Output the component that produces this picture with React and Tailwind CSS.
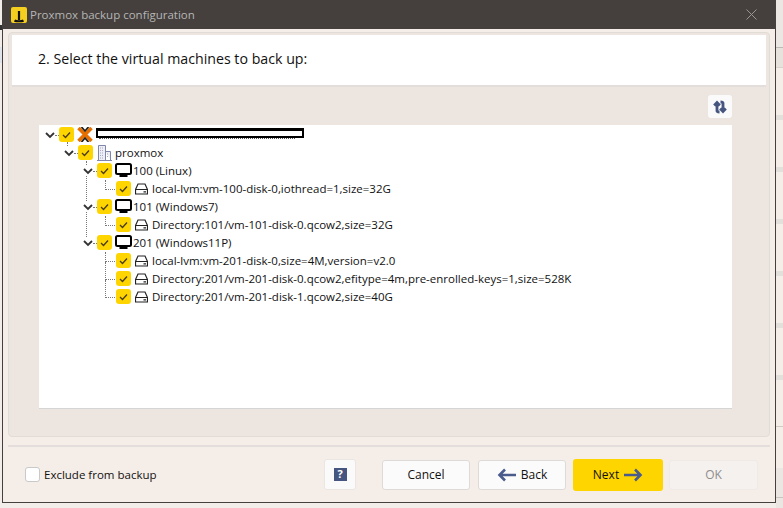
import React from 'react';

const font = "font-['Open_Sans','Noto_Sans',sans-serif]";

// bands of the window that sits behind the dialog, right edge
const backRows = [
  { h: 47, bg: 'bg-[#ece7e3]' },
  { h: 1, bg: 'bg-[#bdb9b6]' },
  { h: 19, bg: 'bg-[#e8e2dd]' },
  { h: 1, bg: 'bg-[#d8d3cf]' },
  { h: 47, bg: 'bg-[#f5ede7]' },
  { h: 5, bg: 'bg-[#e3dfdb]' },
  { h: 47, bg: 'bg-[#f5ede7]' },
  { h: 5, bg: 'bg-[#e3dfdb]' },
  { h: 47, bg: 'bg-[#f5ede7]' },
  { h: 5, bg: 'bg-[#e3dfdb]' },
  { h: 47, bg: 'bg-[#f5ede7]' },
  { h: 5, bg: 'bg-[#e3dfdb]' },
  { h: 47, bg: 'bg-[#f5ede7]' },
  { h: 5, bg: 'bg-[#e3dfdb]' },
  { h: 47, bg: 'bg-[#f5ede7]' },
  { h: 5, bg: 'bg-[#e3dfdb]' },
  { h: 46, bg: 'bg-[#f5ede7]' },
  { h: 1, bg: 'bg-[#cfcac6]' },
  { h: 41, bg: 'bg-[#f5ede7]' },
  { h: 29, bg: 'bg-[#ebe6e2]' },
  { h: 1, bg: 'bg-[#c8c4c0]' },
  { h: 11, bg: 'bg-[#ebe6e2]' },
];

const CheckBox = () => (
  <span className="mb-[1px] flex h-[15px] w-[15px] shrink-0 items-center justify-center rounded-[3px] bg-[#ffd500]">
    <svg width="9" height="8" viewBox="0 0 9 8" fill="none">
      <path d="M1 4l2.500 2.500L8 1.500" stroke="#4a3c10" strokeWidth="1.3" />
    </svg>
  </span>
);

const Chevron = () => (
  <span className="relative z-10 flex h-[10px] w-[10px] shrink-0 items-center bg-white">
    <svg width="10" height="7" viewBox="0 0 10 7" fill="none">
      <path d="M1 1l4 4 4-4" stroke="#333" strokeWidth="1.8" />
    </svg>
  </span>
);

const Monitor = () => (
  <svg width="17" height="15" viewBox="0 0 17 15" className="block shrink-0">
    <rect x="1" y="1" width="15" height="10" rx="1.500" fill="#fff" stroke="#000" strokeWidth="2" />
    <path d="M4.500 11h8v3h-8z" fill="#000" />
  </svg>
);

const Disk = () => (
  <svg width="13" height="12" viewBox="0 0 13 12" fill="none" className="shrink-0">
    <path d="M3 1h7l2.500 5.500V11H.5V6.500z" stroke="#222" strokeWidth="1.200" />
    <path d="M.5 6.500h12M8.500 8.800h2.500" stroke="#222" strokeWidth="1.200" />
  </svg>
);

const Building = () => (
  <svg width="15" height="16" viewBox="0 0 15 16" fill="none" className="block shrink-0">
    <path d="M1.500 15V.5h7V15M8.500 6.500h5V15" fill="#eeeef4" stroke="#7f85ab" />
    <path d="M0 15.500h15" stroke="#7f85ab" />
    <path d="M3 3h4M3 5.500h4M3 8h4M3 10.500h4M3 13h4M10 9h2M10 11.500h2" stroke="#a4a8c4" strokeDasharray="1 1" />
  </svg>
);

const ProxmoxLogo = () => (
  <svg width="16" height="15" viewBox="0 0 16 15" className="block shrink-0">
    <path d="M1.500 1l13 13M14.500 1l-13 13" stroke="#e57000" strokeWidth="3.600" />
    <path d="M4.500 0L8 4l3.500-4M4.500 15L8 11l3.500 4" stroke="#222" strokeWidth="1.800" fill="none" />
  </svg>
);

const Row = ({ indent, children }) => (
  <div className="flex h-[18px] items-center whitespace-nowrap" style={{ paddingLeft: indent }}>
    <Chevron />
    <span className="w-[4px] shrink-0 border-b border-dotted border-[#777]" />
    {children}
  </div>
);

const VmRow = ({ label }) => (
  <Row indent={44}>
    <CheckBox />
    <span className="mb-[1px] ml-[3px]"><Monitor /></span>
    <span className="ml-[1px]">{label}</span>
  </Row>
);

const DiskRow = ({ label, tall }) => (
  <div className="relative ml-[66px] flex h-[18px] items-center gap-[4px] whitespace-nowrap pl-[11px]">
    <span className={`absolute bottom-[8px] left-0 w-[10px] border-b border-l border-dotted border-[#777] ${tall ? 'h-[18px]' : 'h-[10px]'}`} />
    <CheckBox />
    <Disk />
    <span>{label}</span>
  </div>
);

const Footer = () => (
  <div className="flex h-[55px] items-center pl-[22px] pr-[17px] text-[12px] text-[#111]">
    <span className="h-[15px] w-[15px] rounded-[3px] border border-[#c9c9c9] bg-white" />
    <span className="ml-[4px] whitespace-nowrap text-[11.5px]">Exclude from backup</span>
    <button className="ml-auto flex h-[31px] w-[32px] items-center justify-center rounded-[3px] border border-[#ebe6e2] bg-[#fbfafa]">
      <span className="flex h-[13px] w-[13px] items-center justify-center bg-[#46557f] text-[11px] font-bold text-white">?</span>
    </button>
    <button className="ml-[26px] h-[30px] w-[88px] rounded-[3px] border border-[#dedad7] bg-[#fcfbfb]">Cancel</button>
    <button className="ml-[8px] flex h-[30px] w-[88px] items-center justify-center gap-[5px] rounded-[3px] border border-[#dedad7] bg-[#fcfbfb]">
      <svg width="19" height="14" viewBox="0 0 19 14" fill="none">
        <path d="M19 7H3M8 1.500L2.500 7 8 12.500" stroke="#4a5c8c" strokeWidth="2.600" />
      </svg>
      Back
    </button>
    <button className="ml-[7px] flex h-[32px] w-[90px] items-center justify-center gap-[5px] rounded-[3px] bg-[#ffd500]">
      Next
      <svg width="19" height="14" viewBox="0 0 19 14" fill="none">
        <path d="M0 7h16M11 1.500L16.500 7 11 12.500" stroke="#4a5c8c" strokeWidth="2.600" />
      </svg>
    </button>
    <button className="ml-[6px] h-[30px] w-[89px] rounded-[3px] border border-[#efeae6] bg-[#f5f1ee] text-[#8d8d8d]">OK</button>
  </div>
);

export default function App() {
  return (
    <div className={`flex h-[508px] w-[783px] overflow-hidden bg-[#f2ede8] ${font}`}>
      <div className="flex w-[2px] shrink-0 flex-col">
        <div className="mt-[25px] h-[5px] bg-[#333]" />
        <div className="mt-[17px] h-[16px] bg-[#dfe3ea]" />
      </div>

      <div className="flex h-[503px] w-[774px] shrink-0 flex-col border-x border-b border-[#45403d] bg-[#f5ede7]">
        {/* title bar */}
        <div className="flex h-[29px] shrink-0 items-center bg-[#45403d] pl-[8px] pr-[18px] text-[11.5px] text-[#b5b5b5]">
          <span className="flex h-[16px] w-[16px] items-end justify-center rounded-[2px] bg-[#f5cf1f]">
            <svg width="12" height="13" viewBox="0 0 12 13" fill="none">
              <path d="M6 1v9M1.500 10.500c1.500 1 7.500 1 9 0" stroke="#111" strokeWidth="2.200" />
            </svg>
          </span>
          <span className="ml-[3px]">Proxmox backup configuration</span>
          <svg className="ml-auto" width="11" height="11" viewBox="0 0 11 11" fill="none">
            <path d="M.5.5l10 10M10.500.5l-10 10" stroke="#9a9694" />
          </svg>
        </div>

        {/* wizard page */}
        <div className="mx-[5px] mt-[3px] flex h-[405px] shrink-0 flex-col rounded-[4px] border border-[#e2dcd7] bg-[#ece5e0] px-[3px] pt-[2px]">
          <div className="flex h-[52px] shrink-0 items-center border-b-2 border-[#e3dedb] bg-white pb-[2px] pl-[26px] text-[14.2px] text-[#111]">
            2. Select the virtual machines to back up:
          </div>
          <div className="flex justify-end pr-[34px] pt-[8px]">
            <button className="flex h-[23px] w-[24px] items-center justify-center rounded-[3px] bg-[#fbfafa]">
              <svg width="14" height="14" viewBox="0 0 14 14" fill="none" stroke="#46557f" strokeWidth="2.800">
                <path d="M4 11.500V3M1.200 5.500L4 2.500l2.800 3M4 10.500c0 1 1 1.500 2.500 1.500" />
                <path d="M10 2.500V11M7.200 8.500l2.800 3 2.800-3M10 3.500c0-1-1-1.500-2.500-1.500" />
              </svg>
            </button>
          </div>
          <div className="relative ml-[27px] mt-[7px] h-[284px] w-[693px] border-b border-[#d5d5d5] bg-white pt-[1px] text-[11.5px] text-[#111]">
            {/* tree guide lines */}
            <span className="absolute left-[28px] top-[17px] h-[4px] border-l border-dotted border-[#777]" />
            <span className="absolute left-[47px] top-[36px] h-[82px] border-l border-dotted border-[#777]" />

            <div className="relative">
              <Row indent={6}>
                <CheckBox />
                <span className="mb-[1px] ml-[3px]"><ProxmoxLogo /></span>
              </Row>
              {/* server name blacked out in the screenshot */}
              <span className="absolute left-[57px] top-[2px] h-[10px] w-[208px] border-2 border-t-[3px] border-black bg-white" />
              <span className="absolute left-[60px] top-[12px] w-[196px] border-b border-dotted border-[#555]" />
            </div>
            <Row indent={25}>
              <CheckBox />
              <span className="mb-[1px] ml-[4px]"><Building /></span>
              <span className="ml-[3px]">proxmox</span>
            </Row>
            <VmRow label="100 (Linux)" />
            <DiskRow label="local-lvm:vm-100-disk-0,iothread=1,size=32G" />
            <VmRow label="101 (Windows7)" />
            <DiskRow label="Directory:101/vm-101-disk-0.qcow2,size=32G" />
            <VmRow label="201 (Windows11P)" />
            <DiskRow label="local-lvm:vm-201-disk-0,size=4M,version=v2.0" />
            <DiskRow label="Directory:201/vm-201-disk-0.qcow2,efitype=4m,pre-enrolled-keys=1,size=528K" tall />
            <DiskRow label="Directory:201/vm-201-disk-1.qcow2,size=40G" tall />
          </div>
        </div>

        <div className="mx-[5px] mt-[8px] h-[2px] shrink-0 bg-[#e3dedb]" />
        <Footer />
      </div>

      <div className="flex w-[7px] shrink-0 flex-col">
        {backRows.map((r, i) => (
          <div key={i} className={`shrink-0 ${r.bg}`} style={{ height: r.h }} />
        ))}
      </div>
    </div>
  );
}
